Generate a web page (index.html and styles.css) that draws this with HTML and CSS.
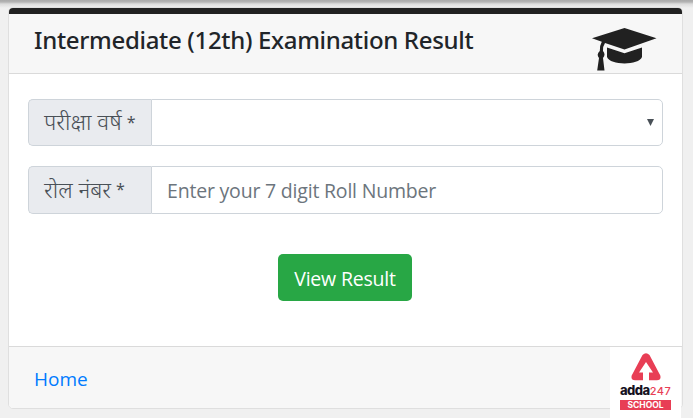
FILE: index.html
```html
<!DOCTYPE html>
<html lang="en">
<head>
    <meta charset="UTF-8">
    <meta name="viewport" content="width=device-width, initial-scale=1.0">
    <title>Intermediate (12th) Examination Result</title>
    <link rel="stylesheet" href="styles.css">
</head>
<body>
    <div class="card">
        <div class="card-header">
            <h1 class="title">Intermediate (12th) Examination Result</h1>
            <svg class="cap-icon" width="65" height="44" viewBox="0 0 65 44" fill="#212121">
                <path d="M32.5 0 L64.5 10.2 L32.5 21.5 L13 15 Q10.8 18 11 23 Q14 26.5 11 30 L12.5 42.5 H5.2 L7 30 Q4 26.5 7.8 23 Q7.6 17.5 9.8 13.8 L0 10.2 Z"/>
                <path d="M15 19.5 L32.5 25.2 L50 19.5 V29 C47 37.5 18 37.5 15 29 Z"/>
            </svg>
        </div>

        <form class="card-body">
            <div class="input-group">
                <label class="input-label" for="year">परीक्षा वर्ष<span class="star">*</span></label>
                <div class="select-wrap">
                    <select class="form-control" id="year"><option></option></select>
                    <svg class="arrow" width="7" height="7" viewBox="0 0 7 7" fill="#495057"><path d="M0 0 H7 L3.5 7 Z"/></svg>
                </div>
            </div>
            <div class="input-group">
                <label class="input-label" for="roll">रोल नंबर<span class="star">*</span></label>
                <input class="form-control" id="roll" type="text" placeholder="Enter your 7 digit Roll Number">
            </div>
            <button class="btn" type="button">View Result</button>
        </form>

        <div class="card-footer">
            <a class="home" href="#">Home</a>
        </div>
    </div>

    <div class="logo">
        <svg class="logo-mark" width="30" height="28" viewBox="0 0 30 28">
            <path d="M11.5 2 Q15 -1.5 18.5 2 L29.3 22.5 Q30.5 27.5 25.5 27.3 H4.5 Q-.5 27.5 .7 22.5 Z" fill="#e83e55"/>
            <path d="M15 9 L22 19.5 H18 V28 H12 V19.5 H8 Z" fill="#fff"/>
        </svg>
        <div class="logo-name"><span>adda</span><span class="logo-num">247</span></div>
        <div class="logo-school">SCHOOL</div>
    </div>
</body>
</html>
```

FILE: styles.css
```css
* {
    margin: 0;
    padding: 0;
    box-sizing: border-box;
}

body {
    height: 418px;
    padding: 7px 10px 9px 8px;
    overflow: hidden;
    background: linear-gradient(#a9a9a9 0, #b4b4b4 2px, #dcdcdc 4px, #f0f0f0 8px) #f0f0f0 no-repeat;
    font-family: "Noto Sans", "Open Sans", sans-serif;
    font-size: 19px;
    color: #212529;
}

.card {
    display: flex;
    flex-direction: column;
    width: 675px;
    height: 402px;
    border: 1px solid #dfdfdf;
    border-radius: 5px;
    background: #fff;
    overflow: hidden;
}

.card-header {
    display: flex;
    justify-content: space-between;
    align-items: flex-start;
    height: 66px;
    padding: 14px 25px 0;
    border-top: 6px solid #212121;
    border-bottom: 1px solid #dadada;
    background: #f7f7f7;
}

.title {
    font-family: "Noto Sans", sans-serif;
    font-size: 24px;
    font-weight: 500;
    line-height: 24px;
    letter-spacing: -0.32px;
    white-space: nowrap;
}

.card-body {
    display: flex;
    flex-direction: column;
    flex: 1;
    padding: 25px 19px 0;
}

.input-group {
    display: flex;
    height: 47px;
    margin-bottom: 20px;
}

.input-group + .input-group {
    height: 48px;
    margin-bottom: 40px;
}

.input-label {
    display: flex;
    align-items: center;
    width: 123px;
    padding: 0 0 2px 15px;
    border: 1px solid #ced4da;
    border-right: 0;
    border-radius: 5px 0 0 5px;
    background: #e9ebef;
    color: #495057;
    font-size: 22.5px;
    font-weight: 300;
    white-space: nowrap;
}

.star {
    margin-left: 5px;
    font-size: 16px;
    font-weight: 400;
}

.select-wrap {
    position: relative;
    display: flex;
    flex: 1;
}

.form-control {
    flex: 1;
    min-width: 0;
    padding: 1px 15px 0;
    border: 1px solid #ced4da;
    border-radius: 0 5px 5px 0;
    outline: none;
    background: #fff;
    appearance: none;
    font-family: "Open Sans", sans-serif;
    font-size: 19.5px;
    letter-spacing: -0.2px;
}

.form-control::placeholder {
    color: #6c757d;
}

.arrow {
    position: absolute;
    top: 20px;
    right: 9px;
}

.btn {
    align-self: center;
    width: 134px;
    height: 47px;
    margin-right: 1px;
    padding-top: 2px;
    border: 0;
    border-radius: 5px;
    background: #28a745;
    color: #fff;
    font-family: "Open Sans", sans-serif;
    font-size: 19.5px;
    letter-spacing: -0.2px;
}

.card-footer {
    height: 62px;
    padding: 19px 25px 0;
    border-top: 1px solid #dadada;
    background: #f7f7f7;
    line-height: 26px;
}

.home {
    color: #007bff;
    font-family: "Open Sans", sans-serif;
    text-decoration: none;
}

/* brand badge over the bottom right corner */
.logo {
    position: absolute;
    top: 347px;
    left: 610px;
    display: flex;
    flex-direction: column;
    align-items: center;
    width: 71px;
    height: 71px;
    padding-top: 6px;
    background: #fff;
}

.logo-name {
    display: flex;
    align-items: baseline;
    height: 18px;
    color: #16121f;
    font-family: Inter, sans-serif;
    font-size: 13px;
    font-weight: 800;
    line-height: 19px;
    letter-spacing: -0.5px;
}

.logo-num {
    color: #e83e55;
    font-size: 11px;
    font-weight: 500;
    letter-spacing: 0.4px;
}

.logo-school {
    width: 51px;
    height: 10px;
    margin-top: 1px;
    background: #e83e55;
    color: #fff;
    font-family: Inter, sans-serif;
    font-size: 8.5px;
    font-weight: 700;
    line-height: 10px;
    text-align: center;
}
```
